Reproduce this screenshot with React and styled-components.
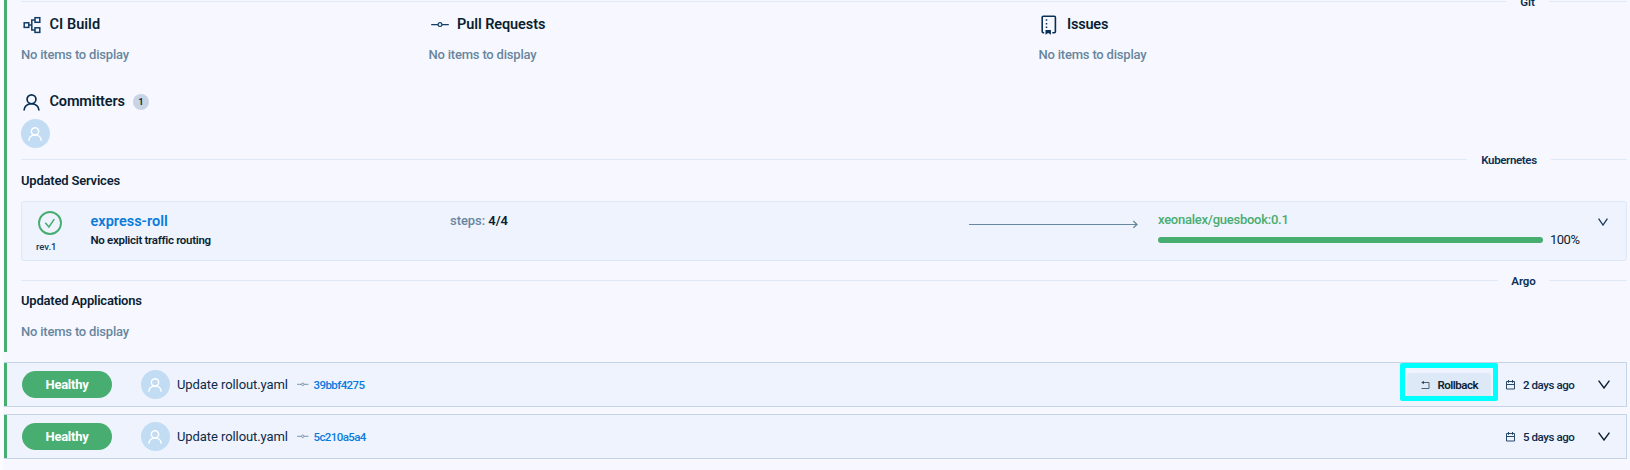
import React from "react";
import styled, { createGlobalStyle } from "styled-components";

const GlobalStyle = createGlobalStyle`
  * { box-sizing: border-box; }
  body {
    margin: 0;
    background: #f7f8ff;
    font-family: Roboto, "Liberation Sans", sans-serif;
    color: #0b1f33;
  }
`;

const Page = styled.main`
  display: flow-root;
  width: 1630px;
  height: 470px;
  overflow: hidden;
  padding: 0 3px 0 4px;
  background: #f7f8ff;
  box-shadow: inset 3px 0 0 #fbfcff;
`;

const Release = styled.section`
  display: flow-root;
  height: 352px;
  border-left: 3px solid #48ad70;
  padding-left: 14px;
  margin-bottom: 10px;
`;

const DividerRow = styled.div`
  display: flex;
  align-items: flex-start;
  height: 16px;
  margin-top: ${(p) => p.$top || 0}px;
`;

const Line = styled.span`
  height: 1px;
  margin-top: 7px;
  background: #e0eaf6;
  ${(p) => (p.$tail ? `width: ${p.$tail}px;` : "flex: 1;")}
`;

const DividerLabel = styled.span`
  width: ${(p) => p.$w}px;
  text-align: center;
  font-size: 11.5px;
  line-height: 16px;
  font-weight: 600;
  white-space: nowrap;
  letter-spacing: ${(p) => p.$ls || 0}px;
  color: #0b3054;
`;

const GitGrid = styled.div`
  display: grid;
  grid-template-columns: 407.5px 610px 1fr;
  grid-template-rows: 77px 60px;
  height: 142px;
  padding-top: 5px;
`;

const Heading = styled.h3`
  display: flex;
  align-items: center;
  height: 20px;
  margin: 0 0 11px;
  font-size: 14.5px;
  line-height: 20px;
  font-weight: 600;
  letter-spacing: ${(p) => p.$ls || 0}px;
`;

const IconSlot = styled.span`
  display: flex;
  flex: none;
  width: 28.5px;
  height: 20px;
  padding-left: 2px;
  align-items: center;
  color: #0b3054;
`;

const Empty = styled.p`
  margin: 0;
  font-size: 13px;
  line-height: 18px;
  font-weight: 500;
  letter-spacing: -0.2px;
  color: #67869e;
`;

const Count = styled.span`
  width: 16px;
  height: 16px;
  margin-left: 8px;
  border-radius: 50%;
  background: #c8d4e6;
  font-size: 9.5px;
  line-height: 16px;
  text-align: center;
`;

const AvatarCircle = styled.span`
  display: flex;
  flex: none;
  align-items: center;
  justify-content: center;
  width: 29px;
  height: 29px;
  padding-right: 1px;
  border-radius: 50%;
  background: #c2dcf4;
  color: #fff;
`;

const Committers = styled.div`
  ${Heading} { margin-bottom: 7px; }
`;

const Subtitle = styled.h4`
  margin: ${(p) => p.$top}px 0 ${(p) => p.$bottom}px;
  font-size: 13px;
  line-height: 18px;
  font-weight: 600;
  letter-spacing: ${(p) => p.$ls}px;
`;

const ServiceCard = styled.article`
  display: grid;
  grid-template-columns: 68.5px 359.5px 519px 189px 385px 44px 1fr;
  height: 60px;
  border: 1px solid #dce8f5;
  border-radius: 3px;
  background: #eef3fe;
`;

const Revision = styled.div`
  padding: 9px 0 0 14px;
  font-size: 9.5px;
  line-height: 12px;
  font-weight: 500;
  letter-spacing: 0;
  color: #16375a;
  svg { display: block; margin: 0 0 6px 2px; }
`;

const ServiceInfo = styled.div`
  padding-top: 10px;
`;

const ServiceName = styled.div`
  height: 20px;
  font-size: 14.5px;
  line-height: 20px;
  font-weight: 600;
  letter-spacing: 0;
  color: #0a7bdc;
`;

const Routing = styled.div`
  font-size: 11.5px;
  line-height: 16px;
  font-weight: 600;
  letter-spacing: -0.3px;
`;

const Steps = styled.div`
  padding-top: 10px;
  font-size: 13px;
  line-height: 18px;
  font-weight: 500;
  letter-spacing: -0.05px;
  color: #67869e;
  b { font-weight: 600; color: #0b1f33; }
`;

const ArrowCell = styled.div`
  padding-top: 17px;
  svg { display: block; }
`;

const ImageCell = styled.div`
  padding-top: 9px;
  font-size: 13px;
  line-height: 18px;
  font-weight: 500;
  letter-spacing: -0.25px;
  color: #48ad70;
`;

const Bar = styled.div`
  height: 6px;
  margin-top: 8px;
  border-radius: 3px;
  background: #48ad70;
`;

const Percent = styled.div`
  padding: 29px 0 0 7px;
  font-size: 13px;
  line-height: 18px;
  letter-spacing: -0.5px;
`;

const ChevronCell = styled.div`
  padding: 16px 0 0 11px;
  svg { display: block; }
`;

const Row = styled.article`
  position: relative;
  display: flex;
  align-items: center;
  height: 45px;
  margin-bottom: 7px;
  padding: 0 16px 0 15px;
  border: 1px solid #c4d3e5;
  border-left: 0;
  background: #eef3fe;
  box-shadow: inset 3px 0 0 #48ad70;
  padding-left: 18px;
`;

const Pill = styled.span`
  width: 90px;
  height: 27px;
  margin-right: 29px;
  border-radius: 14px;
  background: #48ad70;
  color: #fff;
  font-size: 13px;
  line-height: 27px;
  font-weight: 700;
  text-align: center;
  letter-spacing: -0.25px;
`;

const Title = styled.span`
  width: 120px;
  margin-left: 7px;
  font-size: 13px;
  line-height: 18px;
  letter-spacing: -0.08px;
  color: #0b2a4a;
  white-space: nowrap;
`;

const Hash = styled.a`
  margin-left: 5px;
  font-size: 11.5px;
  line-height: 16px;
  color: #0a7bdc;
  font-weight: 500;
  letter-spacing: ${(p) => p.$ls}px;
`;

const Spacer = styled.span`
  flex: 1;
`;

const RollbackButton = styled.button`
  display: flex;
  align-items: center;
  width: 84px;
  height: 24px;
  margin-right: 15.5px;
  padding: 0 0 0 14px;
  border: 0;
  border-radius: 3px;
  background: #dde9f7;
  color: #0b1f33;
  font: 600 11.5px/16px Roboto, "Liberation Sans", sans-serif;
  letter-spacing: -0.5px;
  svg { margin-right: 8px; }
`;

const Highlight = styled.span`
  position: absolute;
  top: 0;
  right: 128px;
  width: 98px;
  height: 38px;
  border: 5px solid #00ffff;
  border-radius: 2px;
  pointer-events: none;
`;

const Age = styled.time`
  width: 75px;
  margin-left: 8px;
  font-size: 11.5px;
  line-height: 16px;
  letter-spacing: -0.42px;
  color: #0b2a4a;
  font-weight: 500;
  white-space: nowrap;
`;

const PersonIcon = ({ size, stroke }) => (
  <svg width={size} height={size} viewBox="0 0 18 18" fill="none" stroke="currentColor" strokeWidth={stroke}>
    <circle cx="9" cy="5.6" r="4.7" />
    <path d="M1.2 17.6v-.6c0-3.700 3.100-6.700 7.800-6.700s7.800 3 7.800 6.700v.6" />
  </svg>
);

const BuildIcon = () => (
  <svg width="19" height="18" viewBox="0 0 19 18" fill="none" stroke="#123c66" strokeWidth="1.5">
    <rect x="1.200" y="6.800" width="4.600" height="4.600" />
    <rect x="12" y="1.700" width="4.800" height="4.600" />
    <rect x="12" y="11.800" width="4.800" height="4.600" />
    <path d="M5.800 9.100h3M12 4H8.800v10.100H12" />
  </svg>
);

const CommitIcon = ({ width, color, stroke }) => (
  <svg width={width} height={width * 0.4} viewBox="0 0 18 7" fill="none" stroke={color} strokeWidth={stroke}>
    <path d="M.2 3.500h6.800M11 3.500h6.800" />
    <circle cx="9" cy="3.500" r="1.900" />
  </svg>
);

const IssuesIcon = () => (
  <svg width="16" height="20" viewBox="0 0 16 20" fill="none" stroke="#0b3054" strokeWidth="1.600">
    <path d="M3.200 17.700H2.300c-.7 0-1.100-.4-1.100-1.100V2.300c0-.7.400-1.100 1.100-1.100h11c.7 0 1.100.4 1.100 1.100v14.300c0 .7-.4 1.100-1.100 1.100h-2" />
    <path d="M4.500 15h5.400v4.700l-2.700-1.600-2.700 1.600z" fill="#0b3054" stroke="none" />
    <path d="M5.500 4.200v1.500M5.500 7.900v1.500M5.500 11.600v1.500" strokeWidth="1.500" />
  </svg>
);

const CheckIcon = () => (
  <svg width="24" height="24" viewBox="0 0 24 24" fill="none" stroke="#48ad70">
    <circle cx="12" cy="12" r="11" strokeWidth="1.900" />
    <path d="M7.300 11.700l3.600 4.200 5.400-7.800" strokeWidth="1.600" />
  </svg>
);

const Chevron = ({ w, h, color, stroke }) => (
  <svg width={w} height={h} viewBox={`0 0 ${w} ${h}`} fill="none" stroke={color} strokeWidth={stroke}>
    <path d={`M.6 .6L${w / 2} ${h - 1}L${w - 0.6} .6`} />
  </svg>
);

const ArrowIcon = () => (
  <svg width="169" height="9" viewBox="0 0 169 9" fill="none" stroke="#67899f">
    <path d="M0 5.500h168" />
    <path d="M164.300 2l3.700 3.500-3.700 3.300" strokeWidth="1.300" />
  </svg>
);

const RollbackIcon = () => (
  <svg width="9" height="10" viewBox="0 0 9 10" fill="none" stroke="#4a6076" strokeWidth="1">
    <path d="M1 2.500h7v6H.5" />
    <path d="M2.800.8v3.400L.3 2.500z" fill="#29435c" stroke="none" />
  </svg>
);

const CalendarIcon = () => (
  <svg width="9" height="10" viewBox="0 0 9 10" fill="none" stroke="#29496b" strokeWidth="1">
    <path d="M.5 1.500h8v7.500h-8zM.5 4.500h8M2.500 0v2.800M6.500 0v2.800" />
  </svg>
);

const Divider = ({ label, w, tail, ls, top }) => (
  <DividerRow $top={top}>
    <Line />
    <DividerLabel $w={w} $ls={ls}>{label}</DividerLabel>
    <Line $tail={tail} />
  </DividerRow>
);

const Avatar = () => (
  <AvatarCircle>
    <PersonIcon size={14} stroke={1.9} />
  </AvatarCircle>
);

const GitBlock = ({ icon, title, ls }) => (
  <div>
    <Heading $ls={ls}><IconSlot>{icon}</IconSlot>{title}</Heading>
    <Empty>No items to display</Empty>
  </div>
);

const ReleaseRow = ({ hash, ls, age, rollback }) => (
  <Row>
    <Pill>Healthy</Pill>
    <Avatar />
    <Title>Update rollout.yaml</Title>
    <CommitIcon width={11.5} color="#7690a8" stroke={1.5} />
    <Hash $ls={ls}>{hash}</Hash>
    <Spacer />
    {rollback && <RollbackButton><RollbackIcon />Rollback</RollbackButton>}
    <CalendarIcon />
    <Age>{age}</Age>
    <Chevron w={12} h={9} color="#0b1f33" stroke={1.4} />
    {rollback && <Highlight />}
  </Row>
);

export default function App() {
  return (
    <>
      <GlobalStyle />
      <Page>
        <Release>
          <Divider label="Git" w={43} tail={78} top={-6} />
          <GitGrid>
            <GitBlock icon={<BuildIcon />} title="CI Build" ls={0.05} />
            <GitBlock icon={<CommitIcon width={18} color="#123c66" stroke={1.2} />} title="Pull Requests" ls={-0.08} />
            <GitBlock icon={<IssuesIcon />} title="Issues" ls={-0.2} />
            <Committers>
              <Heading $ls={-0.15}>
                <IconSlot><PersonIcon size={17} stroke={1.8} /></IconSlot>
                Committers
                <Count>1</Count>
              </Heading>
              <Avatar />
            </Committers>
          </GitGrid>
          <Divider label="Kubernetes" w={84} tail={76} ls={-0.35} />
          <Subtitle $top={4} $bottom={11} $ls={-0.2}>Updated Services</Subtitle>
          <ServiceCard>
            <Revision><CheckIcon />rev.1</Revision>
            <ServiceInfo>
              <ServiceName>express-roll</ServiceName>
              <Routing>No explicit traffic routing</Routing>
            </ServiceInfo>
            <Steps>steps: <b>4/4</b></Steps>
            <ArrowCell><ArrowIcon /></ArrowCell>
            <ImageCell>xeonalex/guesbook:0.1<Bar /></ImageCell>
            <Percent>100%</Percent>
            <ChevronCell><Chevron w={10} h={8} color="#16375a" stroke={1.3} /></ChevronCell>
          </ServiceCard>
          <Divider label="Argo" w={51} tail={78} top={12} ls={-0.1} />
          <Subtitle $top={3} $bottom={13} $ls={-0.2}>Updated Applications</Subtitle>
          <Empty>No items to display</Empty>
        </Release>
        <ReleaseRow hash="39bbf4275" ls={-0.58} age="2 days ago" rollback />
        <ReleaseRow hash="5c210a5a4" ls={-0.6} age="5 days ago" />
      </Page>
    </>
  );
}
